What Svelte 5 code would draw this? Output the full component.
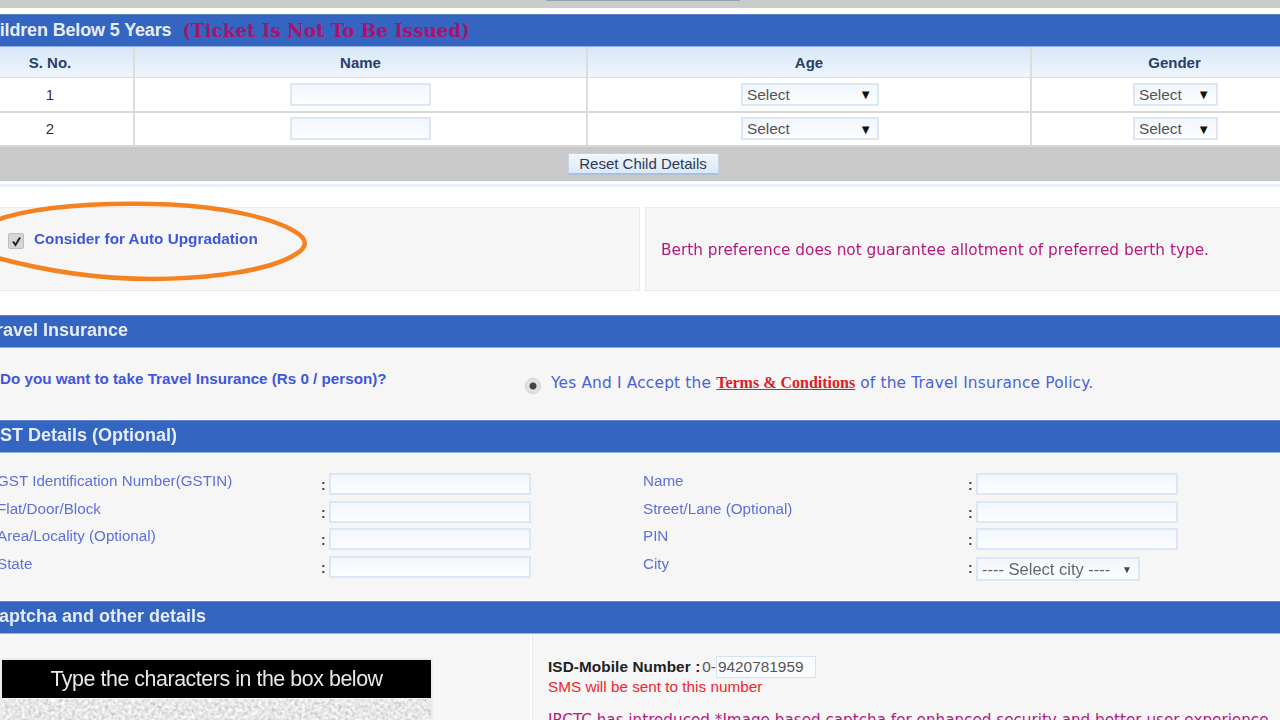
<script>
  const children = [1, 2];
  const gstLeft = ['GST Identification Number(GSTIN)', 'Flat/Door/Block', 'Area/Locality (Optional)', 'State'];
  const gstRight = ['Name', 'Street/Lane (Optional)', 'PIN'];
</script>

<div class="page">
  <div class="topbar"><div class="topbtn"></div></div>

  <div class="bar first">
    <span class="title">Children Below 5 Years</span>
    <span class="warn">(Ticket Is Not To Be Issued)</span>
  </div>
  <div class="kids">
    <div class="th">S. No.</div>
    <div class="th">Name</div>
    <div class="th">Age</div>
    <div class="th">Gender</div>
    {#each children as n}
      <div class="td num">{n}</div>
      <div class="td"><div class="field name"></div></div>
      <div class="td"><div class="field sel age"><span>Select</span><i>▼</i></div></div>
      <div class="td"><div class="field sel gender"><span>Select</span><i>▼</i></div></div>
    {/each}
  </div>
  <div class="resetbar"><div class="resetbtn">Reset Child Details</div></div>
  <div class="thinline"></div>

  <div class="prefs">
    <div class="panel upgrade">
      <span class="check"><svg width="11" height="11" viewBox="0 0 11 11"><path d="M2 5.5 L4.5 9 L9 1.5" fill="none" stroke="#222" stroke-width="2"/></svg></span>
      <span class="upg">Consider for Auto Upgradation</span>
    </div>
    <div class="panel berth">Berth preference does not guarantee allotment of preferred berth type.</div>
  </div>

  <div class="bar"><span class="title">Travel Insurance</span></div>
  <div class="insurance">
    <div class="question">Do you want to take Travel Insurance (Rs 0 / person)?</div>
    <div class="answer">
      <span class="radio"></span>
      <span>Yes And I Accept the <a href="#terms">Terms &amp; Conditions</a> of the Travel Insurance Policy.</span>
    </div>
  </div>

  <div class="bar"><span class="title">GST Details (Optional)</span></div>
  <div class="gst">
    <div class="gstcol">
      {#each gstLeft as label}
        <div class="gstlabel">{label}</div><b>:</b><div class="field gstinput"></div>
      {/each}
    </div>
    <div class="gstcol right">
      {#each gstRight as label}
        <div class="gstlabel">{label}</div><b>:</b><div class="field gstinput"></div>
      {/each}
      <div class="gstlabel">City</div><b>:</b>
      <div class="field sel city"><span>---- Select city ----</span><i>▼</i></div>
    </div>
  </div>

  <div class="bar"><span class="title">Captcha and other details</span></div>
  <div class="bottom">
    <div class="captcha">
      <div class="capbox">
        <div class="caphead">Type the characters in the box below</div>
        <svg class="noise" width="429" height="30">
          <filter id="grain"><feTurbulence type="fractalNoise" baseFrequency="0.3" numOctaves="2" seed="4"/><feColorMatrix type="saturate" values="0"/><feComponentTransfer><feFuncA type="linear" slope="0" intercept="1"/><feFuncR type="linear" slope="0.9" intercept="0.35"/><feFuncG type="linear" slope="0.9" intercept="0.35"/><feFuncB type="linear" slope="0.9" intercept="0.35"/></feComponentTransfer></filter>
          <rect width="429" height="30" filter="url(#grain)"/>
        </svg>
      </div>
    </div>
    <div class="contact">
      <div class="isd"><b>ISD-Mobile Number :</b><span>0-</span><div class="field mobile">9420781959</div></div>
      <div class="sms">SMS will be sent to this number</div>
      <div class="irctc">IRCTC has introduced *Image based captcha for enhanced security and better user experience</div>
    </div>
  </div>

  <svg class="ring" width="340" height="90" viewBox="0 0 340 90">
    <path d="M -8 22 C 30 8 90 4 150 5 C 215 6 268 18 292 32 C 306 40 306 48 294 55 C 268 72 205 80 150 80 C 100 80 50 74 -8 58" fill="none" stroke="#f58220" stroke-width="4.5"/>
  </svg>
</div>

<style>
  :global(body) {
    margin: 0;
    background: #fff;
    overflow: hidden;
  }
  .page {
    position: relative;
    width: 1352px;
    height: 720px;
    margin-left: -33px;
    overflow: hidden;
    font-family: "Liberation Sans", Arial, sans-serif;
    filter: blur(0.7px);
  }
  .topbar {
    height: 8px;
    background: #cbcbc9;
    padding-left: 579px;
    margin-bottom: 6px;
  }
  .topbtn {
    width: 194px;
    height: 1px;
    background: #8ea3b5;
  }
  .bar {
    height: 28px;
    background: #3465c0;
    border-top: 1px solid #5d83c9;
    border-bottom: 1px solid #8fb0e0;
    padding: 0 0 3px 19px;
    display: flex;
    align-items: center;
    gap: 11px;
  }
  .bar .title {
    color: #e6edf8;
    font-size: 18px;
    font-weight: bold;
  }
  .first {
    height: 31px;
    padding: 0 0 0 9px;
  }
  .first .title { letter-spacing: -0.15px; }
  .warn {
    color: #a8136f;
    font: bold 18.3px "DejaVu Serif", serif;
  }
  .kids {
    display: grid;
    grid-template-columns: 168px 453px 444px 287px;
    background: #fff;
  }
  .th {
    height: 31px;
    background: linear-gradient(#d8e7f7, #eff5fc);
    border-right: 2px solid #dcdcdc;
    border-bottom: 1px solid #d5dfea;
    box-sizing: border-box;
    display: flex;
    align-items: center;
    justify-content: center;
    color: #27416e;
    font-size: 15px;
    font-weight: bold;
  }
  .td {
    height: 34.5px;
    border-right: 2px solid #dcdcdc;
    border-bottom: 2px solid #d8d8d8;
    box-sizing: border-box;
    display: flex;
    align-items: center;
    justify-content: center;
  }
  .num {
    color: #333;
    font-size: 15px;
  }
  .field {
    box-sizing: border-box;
    height: 23px;
    background: linear-gradient(#f2f7fc, #fcfdff);
    border: 2px solid #dbe7f4;
    display: flex;
    align-items: center;
    justify-content: space-between;
    color: #555;
    font-size: 15.4px;
  }
  .name { width: 141px; }
  .sel { padding: 1px 4px 0; }
  .sel i {
    color: #111;
    font-size: 13px;
    font-style: normal;
  }
  .age { width: 138px; padding-right: 5px; margin-left: 2px; }
  .gender { width: 85px; padding-right: 6px; margin-left: 2px; }
  .resetbar {
    height: 34px;
    background: #c9c9c9;
    display: flex;
    align-items: center;
    justify-content: center;
    box-sizing: border-box;
  }
  .resetbtn {
    height: 22px;
    width: 151px;
    padding-bottom: 1px;
    box-sizing: border-box;
    display: flex;
    align-items: center;
    justify-content: center;
    background: linear-gradient(#f3f7fc, #dce8f6);
    border: 1px solid #c4d3e6;
    border-bottom: 2px solid #a9bfdc;
    color: #2a3a55;
    font-size: 15px;
  }
  .thinline {
    height: 3px;
    margin: 3px 0 20px;
    background: #eaf1fa;
  }
  .prefs {
    display: grid;
    grid-template-columns: 673px 1fr;
    gap: 5px;
    margin-bottom: 24px;
  }
  .panel {
    height: 84px;
    box-sizing: border-box;
    background: #f6f6f6;
    border: 1px solid #e9e9e9;
    display: flex;
  }
  .upgrade {
    padding: 22px 0 0 40px;
    gap: 10px;
    align-items: flex-start;
  }
  .check {
    width: 16px;
    height: 16px;
    margin-top: 3px;
    background: #d6d6d6;
    border: 1px solid #bdbdbd;
    border-radius: 2px;
    box-sizing: border-box;
    display: flex;
    align-items: center;
    justify-content: center;
  }
  .upg {
    color: #3f57dc;
    font-size: 15.3px;
    font-weight: bold;
    line-height: 18px;
  }
  .berth {
    padding: 1px 0 0 15px;
    align-items: center;
    color: #b3197c;
    font: 15.3px "DejaVu Sans", sans-serif;
  }
  .insurance {
    height: 71px;
    background: #f6f6f6;
    position: relative;
    display: grid;
    grid-template-columns: 525px 1fr;
    padding-left: 33px;
    box-sizing: border-box;
    margin-bottom: 1px;
  }
  .question {
    padding-top: 22px;
    color: #3f57dc;
    font-size: 15.2px;
    font-weight: bold;
  }
  .answer {
    padding-top: 26px;
    display: flex;
    gap: 10px;
    color: #4a62dc;
    font: 15.4px "DejaVu Sans", sans-serif;
    letter-spacing: 0.17px;
  }
  .answer a {
    color: #e01b24;
    font: bold 16px "Liberation Serif", serif;
    text-decoration: underline;
    letter-spacing: 0;
  }
  .radio {
    width: 16px;
    height: 16px;
    margin-top: 4px;
    border-radius: 50%;
    background: radial-gradient(circle, #444 0 3px, #e2e2e2 4px);
    border: 1px solid #cfcfcf;
    box-sizing: border-box;
  }
  .gst {
    height: 147px;
    background: #f6f6f6;
    display: grid;
    grid-template-columns: 646px 1fr;
    padding: 20px 0 0 30px;
    box-sizing: border-box;
    margin-bottom: 1px;
  }
  .gstcol {
    display: grid;
    grid-template-columns: 324px 8px auto;
    grid-auto-rows: 27.7px;
    justify-content: start;
  }
  .gstcol.right { grid-template-columns: 325px 8px auto; }
  .gstcol b {
    color: #444;
    font-size: 14px;
    line-height: 24px;
  }
  .gstlabel {
    color: #5d70dc;
    font-size: 15.2px;
    line-height: 16px;
  }
  .gstinput { width: 202px; height: 22px; }
  .city {
    width: 164px;
    height: 24px;
    margin-top: 1px;
    padding-top: 0;
    color: #666;
    font-size: 16.5px;
  }
  .gstcol .city i { font-size: 10px; color: #444; margin-right: 2px; }
  .bottom {
    display: grid;
    grid-template-columns: 563px 1fr;
    gap: 2px;
    height: 90px;
  }
  .captcha {
    background: #f6f6f6;
    padding: 24px 0 0 33px;
  }
  .capbox {
    width: 429px;
    border: 2px solid #ececec;
  }
  .caphead {
    height: 38px;
    background: #000;
    color: #e8e8e8;
    font-size: 21.4px;
    letter-spacing: -0.45px;
    display: flex;
    align-items: center;
    justify-content: center;
  }
  .noise {
    display: block;
    margin-top: 1px;
  }
  .contact {
    background: #f6f6f6;
    border-left: 1px solid #e6e6e6;
    padding: 22px 0 0 15px;
    font-size: 15.3px;
  }
  .isd {
    display: flex;
    align-items: center;
    height: 22px;
    color: #333;
  }
  .isd b {
    color: #222;
    letter-spacing: 0.1px;
  }
  .isd span {
    color: #555;
    margin-left: 2px;
  }
  .mobile {
    width: 100px;
    height: 22px;
    background: #fafcff;
    border: 1px solid #d5e3f3;
    justify-content: flex-start;
    padding-left: 1px;
  }
  .sms {
    color: #f0262c;
    line-height: 18px;
  }
  .irctc {
    margin-top: 15px;
    color: #b3197c;
    font: 15.2px "DejaVu Sans", sans-serif;
    white-space: nowrap;
  }
  .ring {
    position: absolute;
    left: 35px;
    top: 199px;
    overflow: visible;
  }
</style>
